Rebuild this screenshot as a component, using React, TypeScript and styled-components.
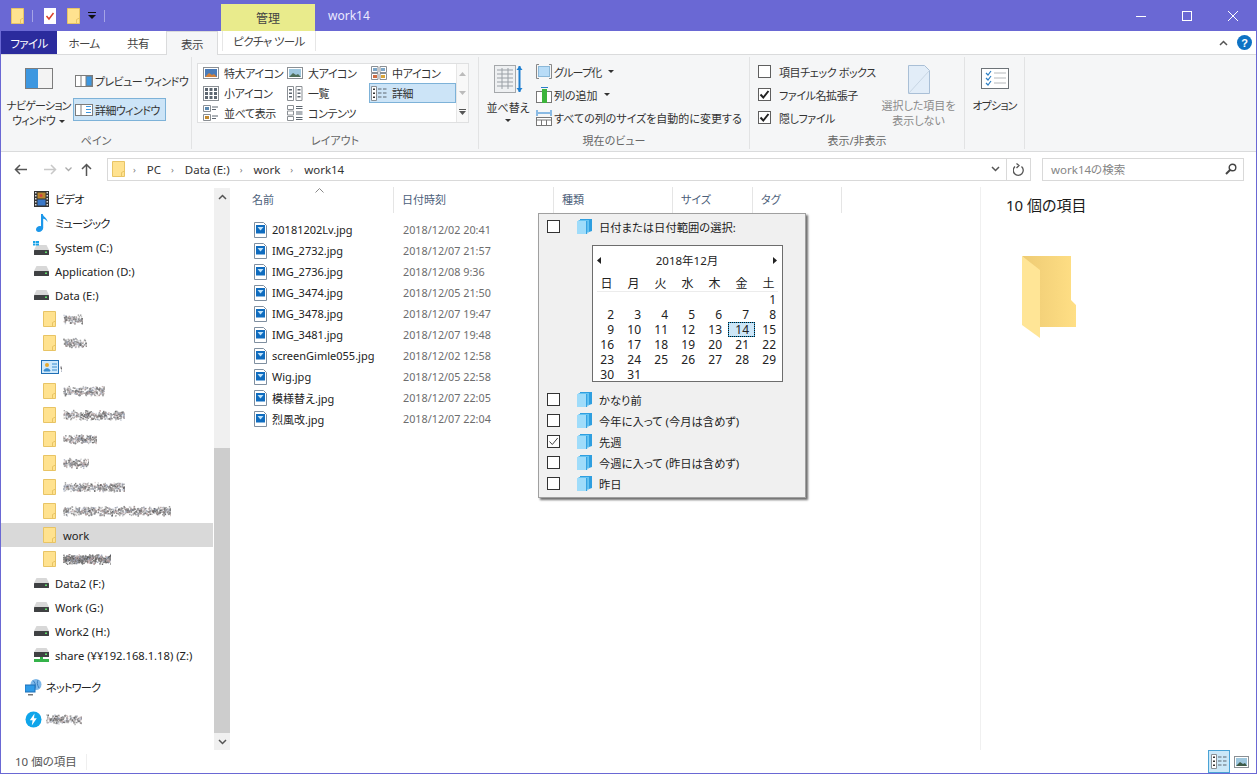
import { ReactElement } from "react";
import styled, { createGlobalStyle } from "styled-components";

const GlobalStyle = createGlobalStyle`
  html, body {
    margin: 0;
    padding: 0;
    height: 100%;
    overflow: hidden;
    background: #fff;
  }
  body {
    font-family: "Noto Sans", "Noto Sans CJK JP", sans-serif;
    font-size: 11px;
    font-feature-settings: "palt";
    color: #1a1a1a;
  }
  * { box-sizing: border-box; }
`;

const Window = styled.div`
  display: flex;
  flex-direction: column;
  width: 1257px;
  height: 774px;
  border: 1px solid #6a68d4;
  border-top: 0;
  background: #fff;
`;

const Kana = styled.span`
  letter-spacing: -0.8px;
`;

/* ---------- title bar ---------- */
const TitleBar = styled.div`
  display: flex;
  height: 31px;
  flex: none;
  background: #6a68d4;
  color: #fff;
  margin: 0 -1px;
`;
const QuickAccess = styled.div`
  display: flex;
  align-items: center;
  gap: 8px;
  width: 221px;
  padding: 0 0 0 11px;
`;
const QatSep = styled.span`
  width: 1px;
  height: 12px;
  background: #a5a4e6;
`;
const QatCheck = styled.svg`
  margin: 0 3px;
`;
const ContextTab = styled.div`
  width: 94px;
  height: 27px;
  margin-top: 4px;
  background: #e9eb8c;
  color: #444;
  display: flex;
  align-items: center;
  justify-content: center;
  font-size: 12px;
`;
const WindowTitle = styled.div`
  margin: 7px 0 0 13px;
  font-size: 12px;
  color: #eceaff;
`;
const Spacer = styled.div`
  flex: 1;
`;
const WinControls = styled.div`
  display: flex;
  padding-right: 1px;
`;
const WinButton = styled.div`
  width: 46px;
  height: 31px;
  display: flex;
  align-items: center;
  justify-content: center;
`;

/* ---------- tabs ---------- */
const TabRow = styled.div`
  display: flex;
  align-items: stretch;
  height: 24px;
  flex: none;
  background: #fff;
  border-bottom: 1px solid #dadbdc;
`;
const Tab = styled.div<{ $w: number; $kind?: "file" | "active" | "context" }>`
  width: ${({ $w }) => $w}px;
  display: flex;
  align-items: center;
  justify-content: center;
  font-size: 11.5px;
  letter-spacing: -0.6px;
  color: ${({ $kind }) => ($kind === "file" ? "#fff" : "#444")};
  background: ${({ $kind }) => ($kind === "file" ? "#2b2b9d" : "#fff")};
  ${({ $kind }) =>
    $kind === "active"
      ? "border: 1px solid #dadbdc; border-bottom: 0; height: 24px; background:#f5f6f7; margin-left:1px;"
      : ""}
  ${({ $kind }) =>
    $kind === "context"
      ? "margin-left: 4px; border-left: 1px solid #e6e6e6; border-right: 1px solid #e6e6e6; height: 20px;"
      : ""}
`;
const TabEnd = styled.div`
  flex: 1;
  display: flex;
  align-items: center;
  justify-content: flex-end;
  gap: 9px;
  padding-right: 4px;
`;

/* ---------- ribbon ---------- */
const Ribbon = styled.div`
  display: flex;
  height: 97px;
  flex: none;
  background: #f5f6f7;
  border-bottom: 1px solid #dadbdc;
  padding: 2px 0 2px 0;
`;
const Group = styled.div<{ $w: number }>`
  width: ${({ $w }) => $w}px;
  flex: none;
  display: flex;
  flex-direction: column;
  border-right: 1px solid #e2e3e4;
`;
const GroupBody = styled.div`
  flex: 1;
  display: flex;
  min-height: 0;
`;
const GroupLabel = styled.div`
  height: 17px;
  text-align: center;
  color: #666;
  font-size: 11px;
  line-height: 17px;
`;
const BigButton = styled.div<{ $w: number; $ml?: number; $muted?: boolean; $top?: number; $gap?: number }>`
  width: ${({ $w }) => $w}px;
  margin-left: ${({ $ml }) => $ml ?? 0}px;
  display: flex;
  flex-direction: column;
  align-items: center;
  padding-top: ${({ $top }) => $top ?? 11}px;
  font-size: 11px;
  line-height: 15px;
  text-align: center;
  white-space: nowrap;
  color: ${({ $muted }) => ($muted ? "#8a8a8a" : "#333")};
  flex: none;
  svg {
    margin-bottom: ${({ $gap }) => $gap ?? 9}px;
    flex: none;
  }
`;
const Caret = styled.span`
  display: inline-block;
  width: 0;
  height: 0;
  margin-left: 4px;
  vertical-align: 2px;
  border-left: 3px solid transparent;
  border-right: 3px solid transparent;
  border-top: 3px solid #333;
`;
const SortCaret = styled(Caret)`
  margin: 4px 0 0 0;
`;
const SmallColumn = styled.div`
  display: flex;
  flex-direction: column;
  gap: 6px;
  padding-top: 12px;
`;
const SmallButton = styled.div<{ $on?: boolean }>`
  display: flex;
  align-items: center;
  gap: 2px;
  height: 23px;
  width: 93px;
  padding-left: 1px;
  font-size: 11px;
  letter-spacing: -0.6px;
  white-space: nowrap;
  color: #333;
  border: 1px solid ${({ $on }) => ($on ? "#7db2d8" : "transparent")};
  background: ${({ $on }) => ($on ? "#cce4f7" : "transparent")};
  svg {
    flex: none;
  }
`;
const Gallery = styled.div`
  display: flex;
  width: 272px;
  height: 60px;
  margin: 6px 0 0 5px;
  border: 1px solid #dfe0e1;
  background: #fff;
`;
const GalleryGrid = styled.div`
  flex: 1;
  display: grid;
  grid-template-columns: 84px 84px 87px;
  grid-auto-rows: 20px;
  margin-top: -1px;
  padding: 0 0 0 3px;
`;
const GalleryItem = styled.div<{ $on?: boolean }>`
  display: flex;
  align-items: center;
  gap: 5px;
  padding-left: 1px;
  font-size: 11px;
  letter-spacing: -0.4px;
  white-space: nowrap;
  color: #333;
  border: 1px solid ${({ $on }) => ($on ? "#7db2d8" : "transparent")};
  background: ${({ $on }) => ($on ? "#cce4f7" : "transparent")};
  svg {
    flex: none;
  }
`;
const GalleryScroll = styled.div`
  width: 14px;
  border-left: 1px solid #e6e6e6;
  display: grid;
  grid-template-rows: 1fr 1fr 1fr;
  justify-items: center;
  align-items: center;
  background: #f8f8f8;
`;
const ListColumn = styled.div<{ $w?: number; $ml?: number }>`
  display: flex;
  flex-direction: column;
  flex: none;
  width: ${({ $w }) => ($w ? `${$w}px` : "auto")};
  margin-left: ${({ $ml }) => $ml ?? 0}px;
  padding-top: 3px;
`;
const ListRow = styled.div`
  display: flex;
  align-items: center;
  gap: 2px;
  height: 23px;
  white-space: nowrap;
  font-size: 11px;
  color: #333;
  svg {
    flex: none;
  }
`;
const CheckRow = styled(ListRow)`
  gap: 8px;
  margin-left: 8px;
  letter-spacing: -0.4px;
`;
const RibbonCheck = styled.span`
  width: 13px;
  height: 13px;
  border: 1px solid #5f5f5f;
  background: #fff;
  display: flex;
  align-items: center;
  justify-content: center;
  flex: none;
`;

/* ---------- address bar ---------- */
const AddressRow = styled.div`
  display: flex;
  align-items: center;
  height: 33px;
  flex: none;
  padding-top: 1px;
`;
const NavArrows = styled.div`
  width: 106px;
  display: flex;
  align-items: center;
  padding-left: 13px;
`;
const AddressBox = styled.div`
  width: 924px;
  height: 23px;
  display: flex;
  align-items: center;
  border: 1px solid #d9d9d9;
  padding-left: 4px;
  font-size: 11.5px;
  color: #333;
`;
const FolderGap = styled.span`
  width: 8px;
`;
const Crumb = styled.span`
  margin: 0 10px 0 11px;
`;
const CrumbSep = styled.span`
  color: #777;
  font-size: 9px;
`;
const ChevronGap = styled.span`
  width: 6px;
`;
const RefreshCell = styled.div`
  width: 24px;
  height: 21px;
  display: flex;
  align-items: center;
  justify-content: center;
  border-left: 1px solid #d9d9d9;
`;
const SearchBox = styled.div`
  width: 202px;
  height: 23px;
  margin-left: 11px;
  border: 1px solid #d9d9d9;
  display: flex;
  align-items: center;
  justify-content: space-between;
  padding: 0 6px 0 8px;
  color: #858585;
  font-size: 11.5px;
`;

/* ---------- main ---------- */
const Main = styled.div`
  flex: 1;
  display: flex;
  min-height: 0;
`;
const Sidebar = styled.div`
  width: 212px;
  flex: none;
  padding-top: 2px;
  color: #222;
`;
const NavRow = styled.div<{ $indent: number; $on?: boolean; $gap?: number; $top?: number }>`
  height: 24px;
  display: flex;
  align-items: center;
  gap: ${({ $gap }) => $gap ?? 5}px;
  padding-left: ${({ $indent }) => $indent}px;
  margin-top: ${({ $top }) => $top ?? 0}px;
  background: ${({ $on }) => ($on ? "#d9d9d9" : "transparent")};
  white-space: nowrap;
  font-size: 11.2px;
  svg {
    flex: none;
  }
`;
const ScrollBar = styled.div`
  width: 16px;
  flex: none;
  margin: 3px 0 0 1px;
  background: #f0f0f0;
  display: flex;
  flex-direction: column;
  align-items: center;
`;
const ScrollEnd = styled.div`
  height: 17px;
  flex: none;
  display: flex;
  align-items: center;
  justify-content: center;
`;
const ScrollGap = styled.div<{ $h: number }>`
  height: ${({ $h }) => $h}px;
  flex: none;
`;
const ScrollThumb = styled.div`
  flex: 1;
  width: 100%;
  background: #cdcdcd;
`;
const FileArea = styled.div`
  position: relative;
  flex: 1;
  min-width: 0;
  padding-top: 2px;
`;
const HeaderRow = styled.div`
  display: flex;
  height: 26px;
  color: #4c607a;
  font-size: 11px;
`;
const HeaderCell = styled.div<{ $w: number; $pad?: number }>`
  width: ${({ $w }) => $w}px;
  flex: none;
  padding-left: ${({ $pad }) => $pad ?? 8}px;
  line-height: 26px;
  border-right: 1px solid #e5e5e5;
`;
const SortArrow = styled.svg`
  position: absolute;
  left: 85px;
  top: 3px;
`;
const FileList = styled.div`
  padding: 6px 0 0 0;
`;
const FileRow = styled.div`
  display: flex;
  align-items: center;
  gap: 3px;
  height: 21px;
  padding-left: 24px;
  white-space: nowrap;
  font-size: 11px;
`;
const FileName = styled.span`
  width: 128px;
  margin-left: 2px;
  color: #222;
`;
const FileDate = styled.span`
  color: #6d6d6d;
  font-size: 10.8px;
`;
const DetailsPane = styled.div`
  width: 276px;
  flex: none;
  border-left: 1px solid #f0f0f0;
  margin-top: 2px;
  padding: 7px 0 0 25px;
  font-size: 15px;
  color: #1a1a1a;
`;
const DetailsIcon = styled.svg`
  display: block;
  margin: 41px 0 0 16px;
`;

/* ---------- filter popup ---------- */
const Popup = styled.div`
  position: absolute;
  left: 308px;
  top: 28px;
  width: 268px;
  height: 285px;
  background: #f0f0f0;
  border: 1px solid #a0a0a0;
  box-shadow: 2px 2px 2px #6f6f6f;
  padding-top: 2px;
  z-index: 5;
`;
const PopupRow = styled.div`
  display: flex;
  align-items: center;
  height: 21px;
  padding-left: 8px;
  font-size: 11.3px;
  color: #222;
`;
const PopupCheck = styled.span`
  width: 13px;
  height: 13px;
  flex: none;
  border: 1px solid #333;
  background: #fff;
  display: flex;
  align-items: center;
  justify-content: center;
`;
const PopupLabel = styled.span`
  margin-left: 7px;
`;
const CubeSlot = styled.span`
  margin-left: 17px;
  display: flex;
`;
const Calendar = styled.div`
  width: 191px;
  height: 137px;
  margin: 8px 0 7px 53px;
  background: #fff;
  border: 1px solid #6d6d6d;
  color: #222;
`;
const CalendarHead = styled.div`
  display: flex;
  align-items: center;
  justify-content: space-between;
  height: 28px;
  padding: 0 5px 0 4px;
  font-size: 11.5px;
`;
const WeekRow = styled.div`
  display: grid;
  grid-template-columns: repeat(7, 27px);
  height: 18px;
  position: relative;
  font-size: 12px;
  text-align: center;
  &::after {
    content: "";
    position: absolute;
    left: 4px;
    right: 4px;
    bottom: 0;
    height: 1px;
    background: #ececec;
  }
`;
const DayGrid = styled.div`
  display: grid;
  grid-template-columns: repeat(7, 27px);
  grid-auto-rows: 15px;
`;
const Day = styled.div<{ $today?: boolean }>`
  text-align: right;
  padding-right: 6px;
  line-height: 15px;
  font-size: 12px;
  ${({ $today }) =>
    $today
      ? "background:#cde6f7; outline:1px dotted #111; outline-offset:-1px; border:1px solid #26a0da; border-radius:1px; line-height:13px; padding-right:5px;"
      : ""}
`;

/* ---------- status bar ---------- */
const StatusBar = styled.div`
  height: 23px;
  flex: none;
  display: flex;
  align-items: center;
  font-size: 11.5px;
  color: #555;
`;
const StatusCount = styled.div`
  width: 86px;
  padding-left: 14px;
  height: 16px;
  line-height: 16px;
  border-right: 1px solid #efefef;
`;
const ViewSwitch = styled.div<{ $on?: boolean }>`
  width: 22px;
  height: 23px;
  display: flex;
  align-items: center;
  justify-content: center;
  border: 1px solid ${({ $on }) => ($on ? "#4aa3d6" : "transparent")};
  background: ${({ $on }) => ($on ? "#cce8f8" : "transparent")};
`;
const StatusRight = styled.div`
  display: flex;
  margin-right: 4px;
`;

/* ---------- drawings ---------- */
const Folder = ({ w = 13, h = 16 }: { w?: number; h?: number }): ReactElement => (
  <svg width={w} height={h} viewBox="0 0 13 16">
    <path d="M.5.5h12v15H.5z" fill="#ffe28f" stroke="#e8c465" />
    <path d="M9.5 15.5v-4l3-1.500" fill="none" stroke="#e8c465" />
  </svg>
);

const Drive = (): ReactElement => (
  <svg width="15" height="10" viewBox="0 0 15 10">
    <path d="M2.500 0h10L15 5H0z" fill="#d8d8d8" />
    <rect y="5" width="15" height="5" rx=".5" fill="#3f4143" />
    <rect x="11" y="6.500" width="2" height="1.500" fill="#5fdc6a" />
  </svg>
);

const SystemDrive = (): ReactElement => (
  <svg width="16" height="15" viewBox="0 0 16 15">
    <path d="M3.500 5h10L16 10H1z" fill="#d8d8d8" />
    <rect x="1" y="10" width="15" height="5" rx=".5" fill="#3f4143" />
    <rect x="12" y="11.500" width="2" height="1.500" fill="#5fdc6a" />
    <path d="M0 1h2.500v2H0zm3 0h3v2H3zM0 3.500h2.500v2H0zm3 0h3v2H3z" fill="#1aa3e8" />
  </svg>
);

const ShareDrive = (): ReactElement => (
  <svg width="15" height="15" viewBox="0 0 15 15">
    <path d="M2.500 0h10L15 4H0z" fill="#d8d8d8" />
    <rect y="4" width="15" height="5" fill="#3f4143" />
    <rect x="11" y="5.500" width="2" height="1.500" fill="#5fdc6a" />
    <path d="M6 9h3v2h6v3H0v-3h6z" fill="#35b34a" />
  </svg>
);

const VideoIcon = (): ReactElement => (
  <svg width="15" height="16" viewBox="0 0 15 16">
    <rect width="15" height="16" fill="#333" />
    <path d="M1 1h1.500v1.500H1zm0 3h1.500v1.500H1zm0 3h1.500v1.500H1zm0 3h1.500v1.500H1zm0 3h1.500v1.500H1zM12.500 1H14v1.500h-1.500zm0 3H14v1.500h-1.500zm0 3H14v1.500h-1.500zm0 3H14v1.500h-1.500zm0 3H14v1.500h-1.500z" fill="#ddd" />
    <rect x="3.500" y="1.500" width="8" height="6" fill="#b8862e" />
    <rect x="3.500" y="8.500" width="8" height="6" fill="#3a78c8" />
    <circle cx="7" cy="4.500" r="1.500" fill="#d2433a" />
  </svg>
);

const MusicIcon = (): ReactElement => (
  <svg width="12" height="18" viewBox="0 0 12 18">
    <path d="M5 0h1.800c.3 3 4.700 3.800 4.700 8-.8-1.800-2.800-3-4.300-3.200V14c0 2.300-2.200 4-4.500 4C1.100 18 0 16.900 0 15.500 0 13.500 2 12 3.700 12c.5 0 .9.100 1.300.2z" fill="#1c97ea" />
  </svg>
);

const NetworkIcon = (): ReactElement => (
  <svg width="17" height="17" viewBox="0 0 17 17">
    <circle cx="11" cy="5.500" r="5.500" fill="#7fb8e8" />
    <path d="M8 1.500c2 2 3 4 2 8M13 1c-1 2-1 5 1 8" stroke="#3b7fc0" fill="none" />
    <rect x="0" y="6" width="10" height="7" fill="#2f9be8" stroke="#1f6fb5" />
    <path d="M3 15h5v1.500H3z" fill="#777" />
  </svg>
);

const BoltIcon = (): ReactElement => (
  <svg width="17" height="17" viewBox="0 0 17 17">
    <circle cx="8.500" cy="8.500" r="8" fill="#0fa5ea" />
    <path d="M9.500 2.500 4.800 9.300h2.800l-.8 5.200 5-7.200H9z" fill="#fff" />
  </svg>
);

const PanelIcon = (): ReactElement => (
  <svg width="18" height="14" viewBox="0 0 18 14">
    <rect x=".5" y=".5" width="17" height="13" fill="#cfe9fb" stroke="#1f6fb5" />
    <circle cx="6" cy="5" r="2" fill="#e5a92f" />
    <path d="M3 11c0-3 6-3 6 0zM11 4h5M11 7h5M11 10h5" fill="#3a8ed0" stroke="#3a8ed0" />
  </svg>
);

const ImageFile = (): ReactElement => (
  <svg width="13" height="16" viewBox="0 0 13 16">
    <path d="M.5.5h9l3 3v12H.5z" fill="#fff" stroke="#7f8fa0" />
    <rect x="2" y="3" width="9" height="8.500" fill="#0f6cbf" />
    <path d="M3.500 5 6.500 8.500 9.500 5z" fill="#bfe3fb" />
  </svg>
);

const Cube = (): ReactElement => (
  <svg width="15" height="15" viewBox="0 0 15 15">
    <path d="M3 0h12v12l-3 1H3z" fill="#2f9fe0" />
    <path d="M1.500 1h10.500v12.500H1.500z" fill="#66c4f2" />
    <path d="M0 2h9v13H0z" fill="#9fdcfa" />
    <path d="M9 2h1.200v13H9z" fill="#36a3e3" />
  </svg>
);

const FineCheck = (): ReactElement => (
  <svg width="11" height="11" viewBox="0 0 11 11">
    <path d="M1.500 5.500 4.300 8.500 9.700 2" fill="none" stroke="#444" />
  </svg>
);

const BoldCheck = (): ReactElement => (
  <svg width="11" height="11" viewBox="0 0 11 11">
    <path d="M1.500 5.500 4.300 8.500 9.500 2" fill="none" stroke="#222" strokeWidth="2" />
  </svg>
);

type ViewKind = "xl" | "lg" | "md" | "sm" | "list" | "detail" | "tile" | "content";

const ViewIcon = ({ kind }: { kind: ViewKind }): ReactElement => {
  const c = "#8a8f94";
  if (kind === "xl" || kind === "lg") {
    return (
      <svg width="16" height="14" viewBox="0 0 16 14">
        <rect x=".5" y="1.500" width="15" height="11" fill="#fff" stroke={c} />
        <rect x="2" y="3" width="12" height="8" fill={kind === "xl" ? "#4a7bb8" : "#9ec7de"} />
        <path d="M2 11l4-4 3 2 2-1 3 3z" fill={kind === "xl" ? "#d2803a" : "#4f6f5a"} />
      </svg>
    );
  }
  if (kind === "md") {
    return (
      <svg width="16" height="14" viewBox="0 0 16 14">
        <path d="M.5.500h6.500v6H.5zM9 .5h6.500v6H9zM.5 7.500h6.500v6H.5zM9 7.500h6.500v6H9z" fill="#fff" stroke={c} />
        <path d="M2 2h4v3H2zM10 2h4v3h-4z" fill="#7da7c9" />
        <path d="M2 9h4v3H2z" fill="#cf6d42" />
        <path d="M10 9h4v3h-4z" fill="#d9a53a" />
      </svg>
    );
  }
  if (kind === "sm") {
    return (
      <svg width="16" height="15" viewBox="0 0 16 15">
        <rect x=".5" y=".5" width="15" height="14" fill="#fff" stroke={c} />
        <path d="M2 2h3v3H2zm4.500 0h3v3h-3zM11 2h3v3h-3zM2 6h3v3H2zm4.500 0h3v3h-3zM11 6h3v3h-3zM2 10h3v3H2zm4.500 0h3v3h-3zM11 10h3v3h-3z" fill="#5d6670" />
      </svg>
    );
  }
  if (kind === "list") {
    return (
      <svg width="16" height="15" viewBox="0 0 16 15">
        <path d="M.5.500h6v14h-6zM9 .5h6v14H9z" fill="#fff" stroke={c} />
        <path d="M2 3h3v1.500H2zm0 3.500h3V8H2zM2 10h3v1.500H2zM10.500 3h3v1.500h-3zm0 3.500h3V8h-3zm0 3.500h3v1.500h-3z" fill="#5d6670" />
      </svg>
    );
  }
  if (kind === "detail") {
    return (
      <svg width="16" height="15" viewBox="0 0 16 15">
        <path d="M.5.500h5v14h-5z" fill="#fff" stroke={c} />
        <path d="M2 2.500h2V4H2zM2 6.500h2V8H2zM2 10.500h2V12H2z" fill="#333" />
        <path d="M7 3h3.500M12 3h3.500M7 7h3.500M12 7h3.500M7 11h3.500M12 11h3.500" stroke="#5d6670" />
      </svg>
    );
  }
  if (kind === "tile") {
    return (
      <svg width="16" height="16" viewBox="0 0 16 16">
        <path d="M.5.500h7v6h-7zM.5 9.500h7v6h-7z" fill="#fff" stroke={c} />
        <rect x="2" y="2" width="4" height="3" fill="#5a88b0" />
        <rect x="2" y="11" width="4" height="3" fill="#c38a2f" />
        <path d="M9 2h6M9 4.500h4M9 11h6M9 13.500h4" stroke="#5d6670" />
      </svg>
    );
  }
  return (
    <svg width="16" height="16" viewBox="0 0 16 16">
      <path d="M.5.500h6v4h-6zM.5 6h6v4h-6zM.5 11.500h6v4h-6z" fill="#fff" stroke={c} />
      <path d="M9 1.500h6.500M9 3.500h6.500M9 7h6.500M9 9h6.500M9 12.500h6.500M9 14.500h6.500" stroke="#5d6670" />
    </svg>
  );
};

const Smudge = ({ w, seed, dark }: { w: number; seed: number; dark?: boolean }): ReactElement => {
  // scattered dots standing in for the scrubbed folder names
  let s = seed * 7919 + 13;
  const next = () => {
    s = (s * 1103515245 + 12345) & 0x7fffffff;
    return s / 0x7fffffff;
  };
  const palette = ["#6e6e6e", "#8c8c8c", "#555", "#b9a0a0", "#9aa3b8", "#808080"];
  const count = Math.round(w * (dark ? 9 : 6));
  const dots = Array.from({ length: count }, (_, i) => {
    const y = next();
    const o = next();
    return (
      <rect
        key={i}
        x={next() * w}
        y={2.500 + (y + next()) * 5.200}
        width="1.400"
        height="1.400"
        fill={palette[Math.floor(next() * palette.length)]}
        opacity={dark ? 0.9 : 0.3 + o * 0.6}
      />
    );
  });
  return (
    <svg width={w} height="16" viewBox={`0 0 ${w} 16`}>
      {dots}
    </svg>
  );
};

const Chevron = ({ up }: { up?: boolean }): ReactElement => (
  <svg width="9" height="6" viewBox="0 0 9 6">
    <path d={up ? "M1 5l3.500-3.500L8 5" : "M1 1l3.500 3.500L8 1"} fill="none" stroke="#555" strokeWidth="1.500" />
  </svg>
);

/* ---------- data ---------- */
const files: [string, string][] = [
  ["20181202Lv.jpg", "2018/12/02 20:41"],
  ["IMG_2732.jpg", "2018/12/07 21:57"],
  ["IMG_2736.jpg", "2018/12/08 9:36"],
  ["IMG_3474.jpg", "2018/12/05 21:50"],
  ["IMG_3478.jpg", "2018/12/07 19:47"],
  ["IMG_3481.jpg", "2018/12/07 19:48"],
  ["screenGimle055.jpg", "2018/12/02 12:58"],
  ["Wig.jpg", "2018/12/05 22:58"],
  ["模様替え.jpg", "2018/12/07 22:05"],
  ["烈風改.jpg", "2018/12/07 22:04"],
];

const gallery: [ViewKind, string, boolean?][] = [
  ["xl", "特大アイコン"],
  ["lg", "大アイコン"],
  ["md", "中アイコン"],
  ["sm", "小アイコン"],
  ["list", "一覧"],
  ["detail", "詳細", true],
  ["tile", "並べて表示"],
  ["content", "コンテンツ"],
];

const weekDays = ["日", "月", "火", "水", "木", "金", "土"];
const filters: [string, boolean][] = [
  ["かなり前", false],
  ["今年に入って (今月は含めず)", false],
  ["先週", true],
  ["今週に入って (昨日は含めず)", false],
  ["昨日", false],
];

export default function App(): ReactElement {
  return (
    <Window>
      <GlobalStyle />
      <TitleBar>
        <QuickAccess>
          <Folder />
          <QatSep />
          <QatCheck width="12" height="16" viewBox="0 0 12 16">
            <path d="M0 0h12v16H0z" fill="#fff" />
            <path d="M2.500 8l2.500 3 4.500-6" fill="none" stroke="#d8402c" strokeWidth="1.500" />
          </QatCheck>
          <Folder />
          <svg width="8" height="8" viewBox="0 0 8 8">
            <path d="M0 0h8v1H0zM0 3h8L4 7z" fill="#111" />
          </svg>
          <QatSep />
        </QuickAccess>
        <ContextTab>管理</ContextTab>
        <WindowTitle>work14</WindowTitle>
        <Spacer />
        <WinControls>
          <WinButton>
            <svg width="10" height="10"><path d="M0 5.500h10" stroke="#fff" /></svg>
          </WinButton>
          <WinButton>
            <svg width="10" height="10"><rect x=".5" y=".5" width="9" height="9" fill="none" stroke="#fff" /></svg>
          </WinButton>
          <WinButton>
            <svg width="10" height="10"><path d="M0 0l10 10M10 0L0 10" stroke="#fff" /></svg>
          </WinButton>
        </WinControls>
      </TitleBar>

      <TabRow>
        <Tab $w={56} $kind="file">ファイル</Tab>
        <Tab $w={54}>ホーム</Tab>
        <Tab $w={54}>共有</Tab>
        <Tab $w={52} $kind="active">表示</Tab>
        <Tab $w={94} $kind="context">ピクチャ ツール</Tab>
        <TabEnd>
          <Chevron up />
          <svg width="15" height="15" viewBox="0 0 15 15">
            <circle cx="7.500" cy="7.500" r="7.500" fill="#0e72c4" />
            <text x="7.500" y="11.500" textAnchor="middle" fontSize="11" fontWeight="700" fill="#fff" fontFamily="Liberation Sans, sans-serif">?</text>
          </svg>
        </TabEnd>
      </TabRow>

      <Ribbon>
        <Group $w={191}>
          <GroupBody>
            <BigButton $w={69} $ml={3}>
              <svg width="28" height="21" viewBox="0 0 28 21">
                <rect x=".5" y=".5" width="27" height="20" fill="#f3f3f3" stroke="#7c7c7c" />
                <rect x="1" y="1" width="12" height="19" fill="#3d97e0" />
              </svg>
              <Kana>ナビゲーション</Kana>
              <span><Kana>ウィンドウ</Kana><Caret /></span>
            </BigButton>
            <SmallColumn>
              <SmallButton>
                <svg width="18" height="12" viewBox="0 0 18 12">
                  <rect x=".5" y=".5" width="17" height="11" fill="#fff" stroke="#7c7c7c" />
                  <path d="M6 0v12M11 1h6v10h-6z" stroke="#7c7c7c" fill="#3d97e0" />
                </svg>
                プレビュー ウィンドウ
              </SmallButton>
              <SmallButton $on>
                <svg width="18" height="12" viewBox="0 0 18 12">
                  <rect x=".5" y=".5" width="17" height="11" fill="#fff" stroke="#7c7c7c" />
                  <path d="M6 0v12" stroke="#7c7c7c" />
                  <path d="M11 2.500h5M11 5.500h5M11 8.500h5" stroke="#3d97e0" />
                </svg>
                詳細ウィンドウ
              </SmallButton>
            </SmallColumn>
          </GroupBody>
          <GroupLabel>ペイン</GroupLabel>
        </Group>

        <Group $w={287}>
          <GroupBody>
            <Gallery>
              <GalleryGrid>
                {gallery.map(([kind, label, on]) => (
                  <GalleryItem key={kind} $on={on}>
                    <ViewIcon kind={kind} />
                    {label}
                  </GalleryItem>
                ))}
              </GalleryGrid>
              <GalleryScroll>
                <svg width="7" height="4"><path d="M0 4l3.500-4L7 4z" fill="#bbb" /></svg>
                <svg width="7" height="4"><path d="M0 0l3.500 4L7 0z" fill="#bbb" /></svg>
                <svg width="7" height="6"><path d="M0 0h7v1H0zM0 2h7L3.500 6z" fill="#555" /></svg>
              </GalleryScroll>
            </Gallery>
          </GroupBody>
          <GroupLabel>レイアウト</GroupLabel>
        </Group>

        <Group $w={271}>
          <GroupBody>
            <BigButton $w={52} $ml={3} $top={8} $gap={6}>
              <svg width="29" height="29" viewBox="0 0 29 29">
                <rect x=".5" y=".5" width="21" height="27" fill="#eef0f2" stroke="#a5a8ab" />
                <path d="M3 5h16M3 9h16M3 13h16M3 17h16M3 21h16M8 3v21M14 3v21" stroke="#9aa0a6" />
                <path d="M25.500 1v26" stroke="#1f7fd0" strokeWidth="2" />
                <path d="M22.500 5l3-4 3 4zM22.500 23l3 4 3-4z" fill="#1f7fd0" />
              </svg>
              <span>並べ替え</span>
              <SortCaret />
            </BigButton>
            <ListColumn $ml={2}>
              <ListRow>
                <svg width="16" height="15" viewBox="0 0 16 15">
                  <path d="M3 .5H.5v14H3M13 .5h2.500v14H13" fill="none" stroke="#888" />
                  <rect x="2.500" y="2.500" width="11" height="10" fill="#b8dcf7" stroke="#8bb8d8" />
                </svg>
                <Kana>グループ化</Kana><Caret />
              </ListRow>
              <ListRow>
                <svg width="16" height="16" viewBox="0 0 16 16">
                  <rect x=".5" y="4.500" width="15" height="11" fill="#fff" stroke="#777" />
                  <rect x="6" y="2" width="5" height="14" fill="#3cb43c" />
                  <path d="M5 .5h7" stroke="#2a7fc9" />
                </svg>
                列の追加<Caret />
              </ListRow>
              <ListRow>
                <svg width="16" height="16" viewBox="0 0 16 16">
                  <path d="M1 0v6M15 0v6M2 3h12" stroke="#1f7fd0" fill="none" />
                  <rect x=".5" y="7.500" width="15" height="8" fill="#fff" stroke="#777" />
                  <path d="M0 10h16M5.500 10v6M10.500 10v6" stroke="#777" />
                </svg>
                すべての列のサイズを自動的に変更する
              </ListRow>
            </ListColumn>
          </GroupBody>
          <GroupLabel>現在のビュー</GroupLabel>
        </Group>

        <Group $w={215}>
          <GroupBody>
            <ListColumn $w={131}>
              <CheckRow>
                <RibbonCheck />
                項目チェック ボックス
              </CheckRow>
              <CheckRow>
                <RibbonCheck><BoldCheck /></RibbonCheck>
                ファイル名拡張子
              </CheckRow>
              <CheckRow>
                <RibbonCheck><BoldCheck /></RibbonCheck>
                隠しファイル
              </CheckRow>
            </ListColumn>
            <BigButton $w={75} $top={8} $gap={4} $muted>
              <svg width="22" height="29" viewBox="0 0 22 29">
                <path d="M.5.500h16l5 5v23H.5z" fill="#e2edf8" stroke="#a9bfd6" />
                <path d="M.5 28.500 21 6" stroke="#c8d6e4" fill="none" />
              </svg>
              <span>選択した項目を</span>
              <span>表示しない</span>
            </BigButton>
          </GroupBody>
          <GroupLabel>表示/非表示</GroupLabel>
        </Group>

        <Group $w={60}>
          <GroupBody>
            <BigButton $w={59}>
              <svg width="28" height="21" viewBox="0 0 28 21">
                <rect x=".5" y=".5" width="27" height="20" fill="#fff" stroke="#6d7378" />
                <path d="M5 5l2 2 3-4M5 10l2 2 3-4M5 15l2 2 3-4" fill="none" stroke="#2c7fc4" strokeWidth="1.200" />
                <path d="M13 5h12M13 10h12M13 15h12" stroke="#b5b8bb" />
              </svg>
              <Kana>オプション</Kana>
            </BigButton>
          </GroupBody>
        </Group>
      </Ribbon>

      <AddressRow>
        <NavArrows>
          <svg width="13" height="11" viewBox="0 0 13 11"><path d="M13 5.500H1.500M6 1 1.500 5.500 6 10" fill="none" stroke="#555" strokeWidth="1.500" /></svg>
          <svg style={{ marginLeft: 17 }} width="13" height="11" viewBox="0 0 13 11"><path d="M0 5.500h11.500M7 1l4.500 4.500L7 10" fill="none" stroke="#c8c8c8" strokeWidth="1.500" /></svg>
          <svg style={{ marginLeft: 8 }} width="7" height="5" viewBox="0 0 7 5"><path d="M.5.500 3.500 3.500 6.500.5" fill="none" stroke="#aaa" strokeWidth="1.300" /></svg>
          <svg style={{ marginLeft: 9 }} width="11" height="13" viewBox="0 0 11 13"><path d="M5.500 13V1.500M1 6l4.500-4.500L10 6" fill="none" stroke="#555" strokeWidth="1.500" /></svg>
        </NavArrows>
        <AddressBox>
          <Folder />
          <FolderGap />
          <CrumbSep>›</CrumbSep>
          <Crumb>PC</Crumb>
          <CrumbSep>›</CrumbSep>
          <Crumb>Data (E:)</Crumb>
          <CrumbSep>›</CrumbSep>
          <Crumb>work</Crumb>
          <CrumbSep>›</CrumbSep>
          <Crumb>work14</Crumb>
          <Spacer />
          <Chevron />
          <ChevronGap />
          <RefreshCell>
            <svg width="12" height="13" viewBox="0 0 12 13">
              <path d="M3 3.500A5 5 0 1 0 9.500 3.500M4.500.500 7 2.500 4.500 5" fill="none" stroke="#555" strokeWidth="1.300" transform="translate(-1 0)" />
            </svg>
          </RefreshCell>
        </AddressBox>
        <SearchBox>
          work14の検索
          <svg width="12" height="12" viewBox="0 0 12 12">
            <circle cx="7.500" cy="4.500" r="3.300" fill="none" stroke="#444" strokeWidth="1.400" />
            <path d="M5 7 1 11" stroke="#444" strokeWidth="2" />
          </svg>
        </SearchBox>
      </AddressRow>

      <Main>
        <Sidebar>
          <NavRow $indent={33} $gap={6}><VideoIcon /><Kana>ビデオ</Kana></NavRow>
          <NavRow $indent={35} $gap={7}><MusicIcon /><Kana>ミュージック</Kana></NavRow>
          <NavRow $indent={32} $gap={6}><SystemDrive />System (C:)</NavRow>
          <NavRow $indent={33} $gap={6}><Drive />Application (D:)</NavRow>
          <NavRow $indent={33} $gap={6}><Drive />Data (E:)</NavRow>
          <NavRow $indent={42} $gap={7}><Folder /><Smudge w={20} seed={1} /></NavRow>
          <NavRow $indent={42} $gap={7}><Folder /><Smudge w={24} seed={2} /></NavRow>
          <NavRow $indent={40} $gap={1}><PanelIcon /><Smudge w={2} seed={3} /></NavRow>
          <NavRow $indent={42} $gap={7}><Folder /><Smudge w={42} seed={4} /></NavRow>
          <NavRow $indent={42} $gap={7}><Folder /><Smudge w={62} seed={5} /></NavRow>
          <NavRow $indent={42} $gap={7}><Folder /><Smudge w={34} seed={6} /></NavRow>
          <NavRow $indent={42} $gap={7}><Folder /><Smudge w={26} seed={7} /></NavRow>
          <NavRow $indent={42} $gap={7}><Folder /><Smudge w={62} seed={8} /></NavRow>
          <NavRow $indent={42} $gap={7}><Folder /><Smudge w={108} seed={9} /></NavRow>
          <NavRow $indent={42} $gap={7} $on><Folder />work</NavRow>
          <NavRow $indent={42} $gap={7}><Folder /><Smudge w={48} seed={10} dark /></NavRow>
          <NavRow $indent={33} $gap={6}><Drive />Data2 (F:)</NavRow>
          <NavRow $indent={33} $gap={6}><Drive />Work (G:)</NavRow>
          <NavRow $indent={33} $gap={6}><Drive />Work2 (H:)</NavRow>
          <NavRow $indent={33} $gap={6}><ShareDrive />share (¥¥192.168.1.18) (Z:)</NavRow>
          <NavRow $indent={24} $gap={4} $top={8}><NetworkIcon /><Kana>ネットワーク</Kana></NavRow>
          <NavRow $indent={24} $gap={4} $top={8}><BoltIcon /><Smudge w={36} seed={11} /></NavRow>
        </Sidebar>
        <ScrollBar>
          <ScrollEnd><Chevron up /></ScrollEnd>
          <ScrollGap $h={243} />
          <ScrollThumb />
          <ScrollEnd><Chevron /></ScrollEnd>
        </ScrollBar>
        <FileArea>
          <SortArrow width="9" height="5" viewBox="0 0 9 5">
            <path d="M.5 4.500l4-4 4 4" fill="none" stroke="#888" />
          </SortArrow>
          <HeaderRow>
            <HeaderCell $w={164} $pad={22}>名前</HeaderCell>
            <HeaderCell $w={160}>日付時刻</HeaderCell>
            <HeaderCell $w={119}>種類</HeaderCell>
            <HeaderCell $w={80}>サイズ</HeaderCell>
            <HeaderCell $w={89}>タグ</HeaderCell>
          </HeaderRow>
          <FileList>
            {files.map(([name, date]) => (
              <FileRow key={name}>
                <ImageFile />
                <FileName>{name}</FileName>
                <FileDate>{date}</FileDate>
              </FileRow>
            ))}
          </FileList>
          <Popup>
            <PopupRow>
              <PopupCheck />
              <CubeSlot><Cube /></CubeSlot>
              <PopupLabel>日付または日付範囲の選択:</PopupLabel>
            </PopupRow>
            <Calendar>
              <CalendarHead>
                <svg width="4" height="7"><path d="M4 0v7L0 3.500z" fill="#222" /></svg>
                2018年12月
                <svg width="4" height="7"><path d="M0 0v7l4-3.500z" fill="#222" /></svg>
              </CalendarHead>
              <WeekRow>
                {weekDays.map((d) => (
                  <span key={d}>{d}</span>
                ))}
              </WeekRow>
              <DayGrid>
                {Array.from({ length: 6 }, (_, i) => (
                  <Day key={`e${i}`} />
                ))}
                {Array.from({ length: 31 }, (_, i) => (
                  <Day key={i} $today={i + 1 === 14}>{i + 1}</Day>
                ))}
              </DayGrid>
            </Calendar>
            {filters.map(([label, on]) => (
              <PopupRow key={label}>
                <PopupCheck>{on && <FineCheck />}</PopupCheck>
                <CubeSlot><Cube /></CubeSlot>
                <PopupLabel>{label}</PopupLabel>
              </PopupRow>
            ))}
          </Popup>
        </FileArea>
        <DetailsPane>
          10 個の項目
          <DetailsIcon width="56" height="82" viewBox="0 0 56 82">
            <defs>
              <linearGradient id="back" x1="0" x2="1" y1="0" y2="0">
                <stop offset="0" stopColor="#eecb74" />
                <stop offset="1" stopColor="#ffdf85" />
              </linearGradient>
            </defs>
            <path d="M0 0h49v44l5 5v22H17V20z" fill="url(#back)" />
            <path d="M0 0l18 14v68L0 69z" fill="#ffe596" />
          </DetailsIcon>
        </DetailsPane>
      </Main>

      <StatusBar>
        <StatusCount>10 個の項目</StatusCount>
        <Spacer />
        <StatusRight>
          <ViewSwitch $on><ViewIcon kind="detail" /></ViewSwitch>
          <ViewSwitch>
            <svg width="15" height="12" viewBox="0 0 15 12">
              <rect x=".5" y=".5" width="14" height="11" fill="#fff" stroke="#8a8f94" />
              <rect x="2" y="2" width="11" height="8" fill="#9ec7de" />
              <path d="M2 10l4-4 3 2 2-1 2 3z" fill="#3e5a48" />
            </svg>
          </ViewSwitch>
        </StatusRight>
      </StatusBar>
    </Window>
  );
}
